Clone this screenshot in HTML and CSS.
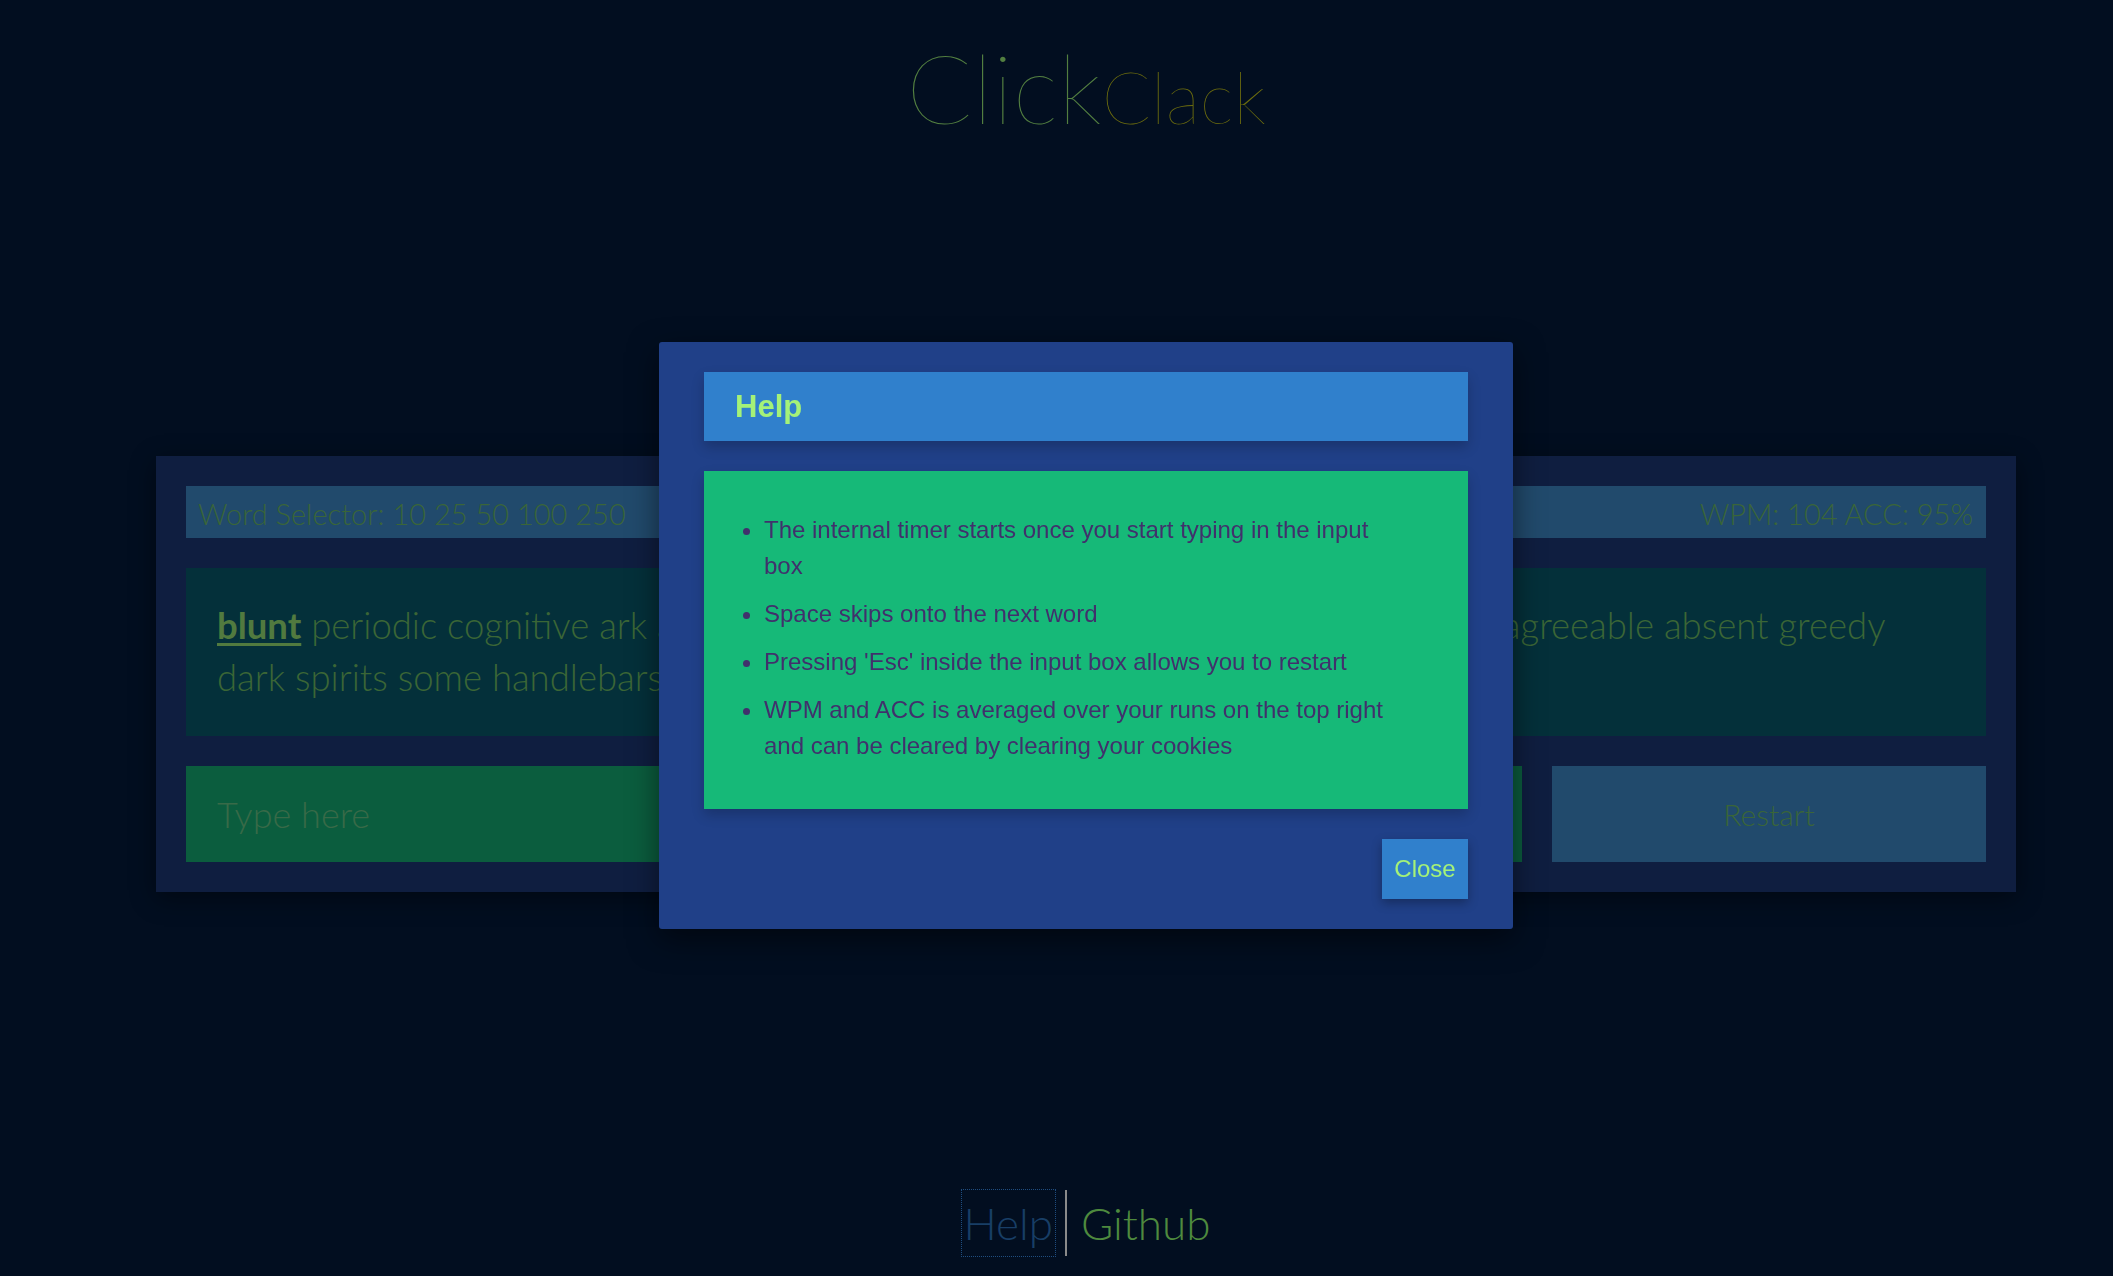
FILE: index.html
```html
<!DOCTYPE html>
<html lang="en">
<head>
<meta charset="utf-8">
<title>ClickClack</title>
<link rel="stylesheet" href="styles.css">
</head>
<body>
<div class="page">
  <header class="title">
    <span class="click">Click</span><span class="clack">Clack</span>
  </header>

  <main class="panel">
    <div class="topbar">
      <div class="selector">Word Selector: 10 25 50 100 250</div>
      <div class="stats">WPM: 104 ACC: 95%</div>
    </div>
    <div class="words">
      <span class="current">blunt</span> periodic cognitive ark apparel tremendous lavish vigorous wholesale hurt disagreeable absent greedy dark spirits some handlebars evasive mark
    </div>
    <div class="inputrow">
      <input class="typebox" type="text" placeholder="Type here">
      <button class="restart">Restart</button>
    </div>
  </main>

  <footer class="footer">
    <a class="help-link">Help</a>
    <span class="sep"></span>
    <a class="github-link">Github</a>
  </footer>
</div>

<div class="overlay">
  <div class="modal">
    <div class="modal-head">Help</div>
    <div class="modal-body">
      <ul>
        <li>The internal timer starts once you start typing in the input box</li>
        <li>Space skips onto the next word</li>
        <li>Pressing 'Esc' inside the input box allows you to restart</li>
        <li>WPM and ACC is averaged over your runs on the top right and can be cleared by clearing your cookies</li>
      </ul>
    </div>
    <div class="modal-foot">
      <button class="close">Close</button>
    </div>
  </div>
</div>
</body>
</html>
```

FILE: styles.css
```css
html, body {
  margin: 0;
  padding: 0;
  height: 100%;
  background: #020e20;
  overflow: hidden;
}

body {
  font-family: "Lato", "Open Sans", sans-serif;
  font-weight: 300;
}

.page {
  height: 100%;
  box-sizing: border-box;
  padding-left: 59px;
  display: flex;
  flex-direction: column;
  align-items: center;
}

.title {
  margin-top: 38px;
  height: 120px;
  display: flex;
  align-items: baseline;
  line-height: 1;
}

.click {
  font-size: 97px;
  font-weight: 100;
  color: #527e40;
}

.clack {
  font-size: 72px;
  font-weight: 100;
  color: #6c6c0e;
}

.panel {
  margin-top: 298px;
  width: 1860px;
  box-sizing: border-box;
  padding: 30px;
  background: #0f1e40;
  box-shadow: 0 6px 24px rgba(0, 0, 0, 0.45);
  display: flex;
  flex-direction: column;
  gap: 30px;
}

.topbar {
  height: 52px;
  background: #214a6c;
  display: flex;
  justify-content: space-between;
  align-items: center;
  padding: 2px 13px 0 12px;
  box-sizing: border-box;
  font-size: 29px;
  color: #3a6539;
}

.words {
  height: 168px;
  box-sizing: border-box;
  background: #04303a;
  padding: 31px 31px 0;
  font-size: 36.5px;
  line-height: 52px;
  color: #3b6636;
}

.current {
  font-weight: 700;
  color: #517a3f;
  text-decoration: underline;
  text-decoration-thickness: 3px;
  text-underline-offset: 4px;
}

.inputrow {
  display: flex;
  gap: 30px;
  height: 96px;
}

.typebox {
  flex: 1;
  border: none;
  outline: none;
  background: #0b5d3e;
  padding: 0 31px;
  font-family: inherit;
  font-weight: 300;
  font-size: 36px;
  color: #3b6636;
}

.typebox::placeholder {
  color: #386a48;
}

.restart {
  width: 434px;
  border: none;
  background: #214a6c;
  font-family: inherit;
  font-weight: 300;
  font-size: 30px;
  color: #3a6539;
}

.footer {
  margin-top: auto;
  margin-bottom: 20px;
  display: flex;
  align-items: stretch;
  gap: 10px;
  font-size: 44px;
  line-height: 66px;
}

.help-link {
  color: #183e66;
  outline: 1px dotted #1f4d80;
  padding: 0 2px;
}

.sep {
  width: 2px;
  background: #8a8a8a;
}

.github-link {
  color: #4e8a3e;
  margin-left: 4px;
}

.overlay {
  position: fixed;
  inset: 0;
  padding-left: 59px;
  padding-bottom: 5px;
  display: flex;
  align-items: center;
  justify-content: center;
}

.modal {
  width: 854px;
  box-sizing: border-box;
  padding: 30px 45px;
  background: #204088;
  border-radius: 3px;
  box-shadow: 0 10px 30px rgba(0, 0, 0, 0.5);
  font-family: "Liberation Sans", Arial, sans-serif;
  font-weight: 400;
  display: flex;
  flex-direction: column;
  gap: 30px;
}

.modal-head {
  height: 69px;
  box-sizing: border-box;
  padding-left: 31px;
  background: #3080cc;
  color: #a4f278;
  font-weight: 700;
  font-size: 31px;
  display: flex;
  align-items: center;
  box-shadow: 0 6px 12px rgba(0, 0, 0, 0.2);
}

.modal-body {
  background: #16b978;
  padding: 17px 75px 21px 20px;
  color: #41306c;
  font-size: 24px;
  line-height: 36px;
  box-shadow: 0 6px 12px rgba(0, 0, 0, 0.2);
}

.modal-body ul {
  margin: 24px 0;
  padding-left: 40px;
}

.modal-body li {
  margin-bottom: 12px;
}

.modal-foot {
  display: flex;
  justify-content: flex-end;
}

.close {
  width: 86px;
  height: 60px;
  border: none;
  background: #3080cc;
  color: #a4f278;
  font-family: "Liberation Sans", Arial, sans-serif;
  font-size: 24px;
  padding: 0;
  box-shadow: 0 4px 10px rgba(0, 0, 0, 0.3);
}
```
